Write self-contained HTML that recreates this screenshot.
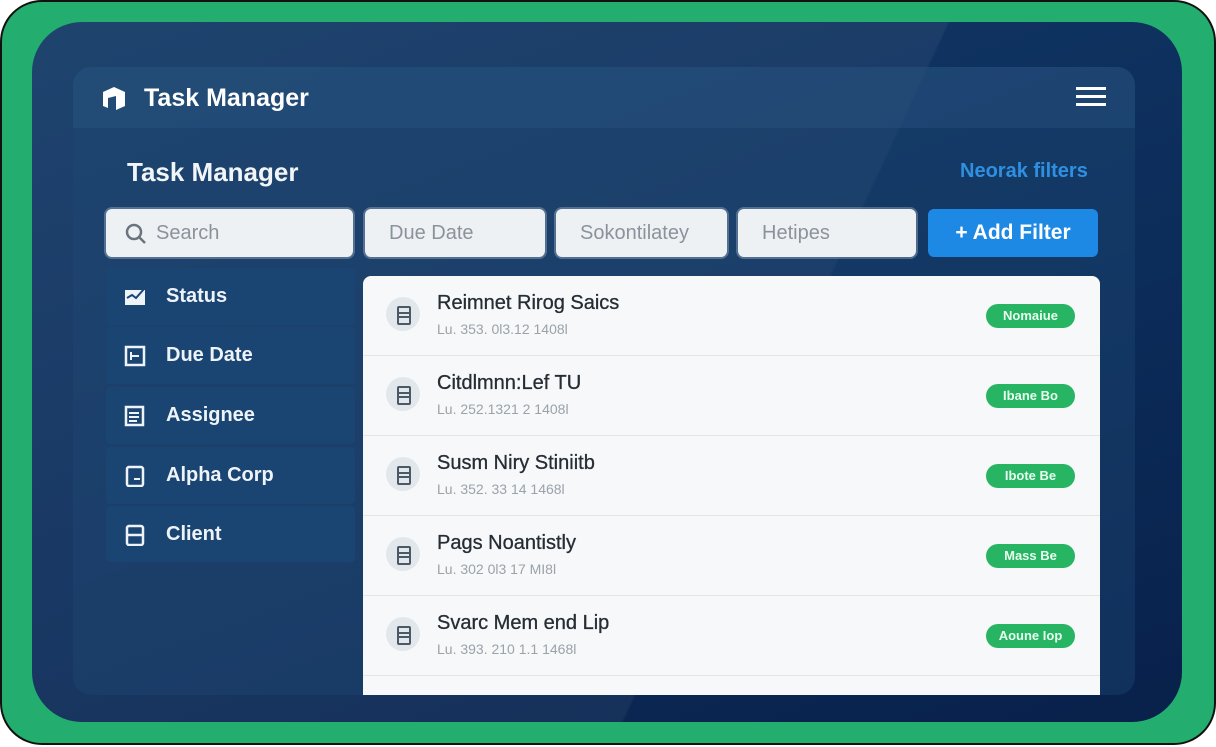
<!DOCTYPE html>
<html><head><meta charset="utf-8"><style>
*{margin:0;padding:0;box-sizing:border-box}
body{width:1216px;height:747px;background:#fff;font-family:"Liberation Sans",sans-serif;position:relative;overflow:hidden}
.outer{position:absolute;left:0;top:0;width:1216px;height:745px;background:#23ae6f;border:2px solid #111;border-radius:42px}
.dark{position:absolute;left:32px;top:22px;width:1150px;height:700px;border-radius:50px;background:linear-gradient(160deg,#123a66 0%,#0d2e5c 50%,#08214b 100%);overflow:hidden}
.stripe{position:absolute;left:0;top:0;width:100%;height:100%;background:linear-gradient(115deg,rgba(255,255,255,0.05) 0%,rgba(255,255,255,0.05) 62%,rgba(0,0,0,0) 62.2%)}
.app{position:absolute;left:73px;top:67px;width:1062px;height:628px;border-radius:18px;background:rgba(30,72,115,0.4)}
.hdr{position:absolute;left:73px;top:67px;width:1062px;height:61px;border-radius:18px 18px 0 0;background:rgba(45,90,135,0.35)}
.t{position:absolute;color:#fff;font-weight:bold}
.inp{position:absolute;top:209px;height:48px;background:#eef1f4;border-radius:6px;color:#8a939c;font-size:20px;line-height:48px;padding-left:24px;box-shadow:0 0 0 2px rgba(255,255,255,0.25)}
.btn{position:absolute;left:928px;top:209px;width:170px;height:48px;background:#1e88e5;border-radius:6px;color:#fff;font-size:21px;font-weight:bold;line-height:48px;text-align:center}
.side{position:absolute;left:106px;width:249px;height:57px;background:#1a4573;border-radius:4px;color:#eef3f8;font-size:20px;font-weight:bold;line-height:57px;padding-left:60px}
.side svg{position:absolute;left:18px;top:18px}
.list{position:absolute;left:363px;top:276px;width:737px;height:419px;background:#f7f8f9;border-radius:8px 8px 0 0;overflow:hidden}
.row{position:absolute;left:0;width:737px;height:80px;border-bottom:1px solid #e3e6e9}
.ic{position:absolute;left:23px;top:21px;width:34px;height:34px;border-radius:50%;background:#e2e7ec}
.ic:after{content:"";position:absolute;left:11px;top:9px;width:10px;height:15px;border:2px solid #4a5968;border-radius:2px;background:linear-gradient(#4a5968,#4a5968) 0 4px/100% 2px no-repeat,linear-gradient(#4a5968,#4a5968) 0 8px/100% 2px no-repeat}
.rt{position:absolute;left:74px;top:16px;font-size:20px;color:#262d35;-webkit-text-stroke:0.3px #262d35}
.rs{position:absolute;left:74px;top:45px;font-size:14px;color:#9aa2aa}
.pill{position:absolute;left:623px;top:28px;width:89px;height:24px;border-radius:12px;background:#27b463;color:#e8fff0;font-size:13px;text-align:center;line-height:24px;font-weight:bold}
</style></head><body>
<div class="outer"></div>
<div class="dark"><div class="stripe"></div></div>
<div class="app"></div>
<div class="hdr"></div>
<svg style="position:absolute;left:100px;top:84px" width="28" height="28" viewBox="0 0 28 28"><path d="M3 8 L14 3 L25 8 L25 22 L16 26 L16 12 L8 14 L8 24 L3 22Z" fill="#fff"/></svg>
<div class="t" style="left:144px;top:84px;font-size:25px">Task Manager</div>
<svg style="position:absolute;left:1076px;top:86px" width="30" height="22"><rect y="1" width="30" height="3" fill="#fff"/><rect y="9" width="30" height="3" fill="#fff"/><rect y="17" width="30" height="3" fill="#fff"/></svg>
<div class="t" style="left:127px;top:157px;font-size:26px;color:#f2f5f8">Task Manager</div>
<div class="t" style="left:960px;top:160px;font-size:20px;color:#2f8fe0">Neorak filters</div>
<div class="inp" style="left:106px;width:247px;padding-left:50px">Search<svg style="position:absolute;left:18px;top:13px" width="24" height="24"><circle cx="10" cy="10" r="7" stroke="#6a747e" stroke-width="2.5" fill="none"/><path d="M15 15 L21 21" stroke="#6a747e" stroke-width="2.5"/></svg></div>
<div class="inp" style="left:365px;width:180px">Due Date</div>
<div class="inp" style="left:556px;width:171px">Sokontilatey</div>
<div class="inp" style="left:738px;width:178px">Hetipes</div>
<div class="btn">+ Add Filter</div>
<div class="side" style="top:268px"><svg width="22" height="20"><rect x="1" y="4" width="20" height="15" fill="#eef3f8"/><path d="M3 12 L8 9 L12 12 L20 3" stroke="#1a4573" stroke-width="2" fill="none"/></svg>Status</div>
<div class="side" style="top:327px"><svg width="22" height="22"><rect x="2" y="2" width="18" height="18" stroke="#eef3f8" stroke-width="2.5" fill="none"/><path d="M7 11h8M7 7v8" stroke="#eef3f8" stroke-width="2"/></svg>Due Date</div>
<div class="side" style="top:387px"><svg width="22" height="22"><rect x="2" y="2" width="17" height="18" stroke="#eef3f8" stroke-width="2.5" fill="none"/><path d="M5 8h10M5 12h10M5 16h8" stroke="#eef3f8" stroke-width="2"/></svg>Assignee</div>
<div class="side" style="top:447px"><svg width="22" height="22"><rect x="3" y="2" width="16" height="19" rx="2" stroke="#eef3f8" stroke-width="2.5" fill="none"/><path d="M10 14h6" stroke="#eef3f8" stroke-width="2"/></svg>Alpha Corp</div>
<div class="side" style="top:506px;height:56px"><svg width="22" height="22"><rect x="3" y="2" width="16" height="19" rx="2" stroke="#eef3f8" stroke-width="2.5" fill="none"/><path d="M3 11h16" stroke="#eef3f8" stroke-width="2.5"/></svg>Client</div>
<div class="list">
<div class="row" style="top:0"><div class="ic"></div><div class="rt">Reimnet Rirog Saics</div><div class="rs">Lu. 353. 0l3.12 1408l</div><div class="pill">Nomaiue</div></div>
<div class="row" style="top:80px"><div class="ic"></div><div class="rt">Citdlmnn:Lef TU</div><div class="rs">Lu. 252.1321 2 1408l</div><div class="pill">Ibane Bo</div></div>
<div class="row" style="top:160px"><div class="ic"></div><div class="rt">Susm Niry Stiniitb</div><div class="rs">Lu. 352. 33 14 1468l</div><div class="pill">Ibote Be</div></div>
<div class="row" style="top:240px"><div class="ic"></div><div class="rt">Pags Noantistly</div><div class="rs">Lu. 302 0l3 17 MI8l</div><div class="pill">Mass Be</div></div>
<div class="row" style="top:320px"><div class="ic"></div><div class="rt">Svarc Mem end Lip</div><div class="rs">Lu. 393. 210 1.1 1468l</div><div class="pill">Aoune Iop</div></div>
</div>
</body></html>
